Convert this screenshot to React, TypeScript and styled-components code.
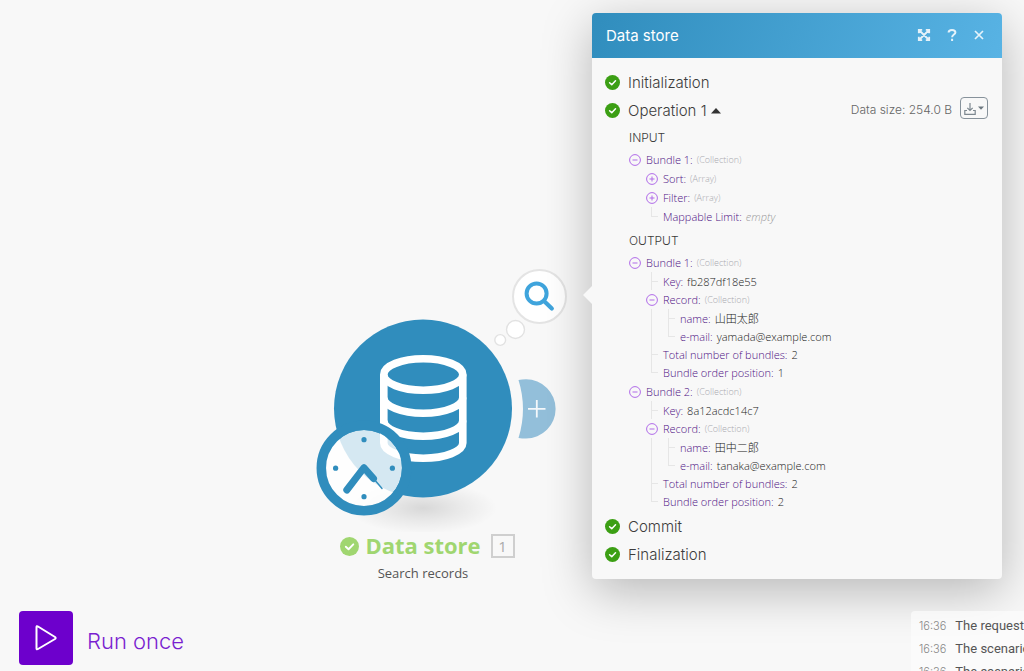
import React from "react";
import styled, { createGlobalStyle } from "styled-components";

const ui = `Inter, "Liberation Sans", sans-serif`;
const humanist = `"Open Sans", "Noto Sans", "Noto Sans CJK JP", sans-serif`;

const GlobalStyle = createGlobalStyle`
  * { box-sizing: border-box; }
  body { margin: 0; background: #f8f8f8; font-family: ${ui}; color: #555; }
  button { font: inherit; color: inherit; background: none; border: 0; padding: 0; cursor: pointer; }
  ul { list-style: none; margin: 0; padding: 0; }
  h1, h2, h3, p { margin: 0; font-weight: 400; }
`;

const Page = styled.div`
  display: flex;
  flex-direction: column;
  height: 100vh;
  overflow: hidden;
`;

const Workspace = styled.main`
  display: flex;
  align-items: flex-start;
  flex: 0 0 auto;
  padding: 13px 22px 32px 0;
`;

const Canvas = styled.section`
  position: relative;
  flex: 1;
  align-self: stretch;
`;

const Module = styled.div`
  position: absolute;
  right: 22px;
  top: 249px;
  width: 260px;
`;

const ModuleArt = styled.svg`
  display: block;
  width: 260px;
  height: 270px;
`;

const AddButton = styled.button`
  position: absolute;
  left: 208px;
  top: 117px;
  width: 38px;
  height: 60px;
  svg { display: block; }
`;

const BubbleButton = styled.button`
  position: absolute;
  left: 202px;
  top: 7px;
  width: 55px;
  height: 55px;
  border: 2px solid #e4e4e4;
  border-radius: 50%;
  background: #fff;
  svg { display: block; }
`;

const ModuleCaption = styled.div`
  position: absolute;
  left: 0;
  top: 268px;
  width: 235px;
  display: flex;
  flex-direction: column;
  align-items: center;
  font-family: ${humanist};
`;

const ModuleTitle = styled.div`
  display: flex;
  align-items: flex-end;
  gap: 6px;
  h2 { font-size: 22px; line-height: 30px; font-weight: 700; color: #a0d670; white-space: nowrap; }
  svg { margin-bottom: 4px; }
`;

const RunCount = styled.span`
  width: 24px;
  height: 24px;
  margin: 0 0 2px 4px;
  border: 2px solid #cfcfcf;
  color: #aaa;
  font-size: 15px;
  line-height: 20px;
  text-align: center;
`;

const ModuleSubtitle = styled.p`
  padding-right: 9px;
  font-size: 13px;
  line-height: 26px;
  color: #555;
`;

const Panel = styled.aside`
  position: relative;
  width: 410px;
  border-radius: 4px;
  background: #f8f8f8;
  box-shadow: 0 12px 50px rgba(0, 0, 0, 0.27);
  &::before {
    content: "";
    position: absolute;
    left: -9px;
    top: 273px;
    border: 9px solid transparent;
    border-left-width: 0;
    border-right-color: #f8f8f8;
  }
`;

const PanelHeader = styled.header`
  display: flex;
  align-items: center;
  justify-content: space-between;
  height: 45px;
  padding: 0 17px 0 14px;
  border-radius: 4px 4px 0 0;
  background: linear-gradient(110deg, #308dbd, #58b3e4);
  color: #fff;
  h1 { font-size: 15px; line-height: 20px; }
`;

const HeaderActions = styled.div`
  display: flex;
  align-items: center;
  gap: 15px;
  padding-bottom: 2px;
  opacity: 0.85;
  button { display: flex; }
`;

const PanelBody = styled.div`
  padding: 10px 14px 11px 13px;
`;

const StatusRow = styled.div`
  display: flex;
  align-items: center;
  gap: 8px;
  height: 28px;
  h2, button { padding-top: 2px; font-size: 15px; line-height: 20px; font-weight: 300; color: #3c3c3c; }
  button { display: flex; align-items: center; gap: 4px; }
`;

const DataSize = styled.span`
  margin-left: auto;
  font-size: 12px;
  font-weight: 300;
  line-height: 16px;
  color: #666;
`;

const DownloadButton = styled.button`
  display: flex;
  align-items: center;
  justify-content: center;
  width: 28px;
  height: 22px;
  margin-bottom: 4px;
  border: 1px solid #87929b;
  border-radius: 4px;
`;

const Section = styled.section`
  padding-left: 24px;
  margin-bottom: 2px;
  h3 { padding-top: 2px; font-size: 12px; line-height: 24px; font-weight: 300; color: #3c3c3c; }
`;

const Tree = styled.ul`
  font-family: ${humanist};
  font-size: 11px;
  font-weight: 300;
  & > li + li { margin-top: 1px; }
`;

const Branch = styled.ul`
  padding-left: 17px;
`;

const Item = styled.li<{ $lines?: boolean; $leaf?: boolean }>`
  position: relative;
  ${({ $lines, $leaf }) =>
    $lines &&
    `
    &::before {
      content: "";
      position: absolute;
      left: 5px;
      top: ${$leaf ? 0 : 19}px;
      bottom: 0;
      border-left: 1px solid #e6e6e6;
    }
    &:last-child::before { bottom: 9px; }
  `}
`;

const Line = styled.div<{ $leaf?: boolean }>`
  display: flex;
  align-items: center;
  gap: 4px;
  height: ${({ $leaf }) => ($leaf ? 18 : 19)}px;
  white-space: nowrap;
  ${({ $leaf }) =>
    $leaf &&
    `
    padding-left: 17px;
    &::before {
      content: "";
      position: absolute;
      left: 5px;
      top: 9px;
      width: 7px;
      border-top: 1px solid #e6e6e6;
    }
  `}
`;

const Toggle = styled.button`
  display: flex;
  width: 12px;
  height: 12px;
  margin-right: 1px;
`;

const Name = styled.span`
  color: #4e1084;
`;

const Value = styled.span`
  color: #222;
`;

const Kind = styled.span`
  font-size: 9px;
  color: #aaaab0;
`;

const Empty = styled.em`
  color: #999;
`;

const Footer = styled.footer`
  display: flex;
  align-items: flex-start;
  justify-content: space-between;
  flex: 1;
  min-height: 0;
  padding-left: 19px;
`;

const RunButton = styled.button`
  display: flex;
  align-items: center;
  gap: 14px;
  font-size: 22px;
  font-weight: 300;
  line-height: 28px;
  color: #7a1fd0;
`;

const RunIcon = styled.span`
  display: flex;
  align-items: center;
  justify-content: center;
  width: 54px;
  height: 54px;
  border-radius: 4px;
  background: #6d00cc;
`;

const RunLabel = styled.span`
  padding-top: 6px;
`;

const Log = styled.ul`
  position: relative;
  display: flex;
  flex-direction: column;
  justify-content: flex-end;
  width: 113px;
  height: 72px;
  padding-left: 8px;
  overflow: hidden;
  border-radius: 4px 0 0 0;
  background: rgba(252, 252, 252, 0.7);
`;

const LogRow = styled.li`
  display: flex;
  align-items: center;
  gap: 9px;
  flex: 0 0 23px;
  font-family: Roboto, ${ui};
  font-size: 13px;
  color: #555;
  white-space: nowrap;
  time { font-family: ${ui}; font-size: 11px; font-weight: 300; color: #888; }
`;

const Check = ({ size = 15, color = "#3c9f14" }: { size?: number; color?: string }) => (
  <svg width={size} height={size} viewBox="0 0 16 16" aria-hidden="true">
    <circle cx="8" cy="8" r="8" fill={color} />
    <path d="M4.9 8.2 7.2 10.3 11.2 6.2" fill="none" stroke="#fff" strokeWidth="1.6" strokeLinecap="round" strokeLinejoin="round" />
  </svg>
);

type Node = { name: string; value?: string; kind?: string; closed?: boolean; children?: Node[] };

const TreeItem = ({ node, nested }: { node: Node; nested?: boolean }) => {
  const leaf = !node.kind;
  return (
    <Item $lines={nested} $leaf={leaf}>
      <Line $leaf={leaf}>
        {!leaf && (
          <Toggle aria-label={`${node.closed ? "Expand" : "Collapse"} ${node.name}`}>
            <svg width="12" height="12" viewBox="0 0 12 12" fill="none" stroke="#b06be8">
              <circle cx="6" cy="6" r="5.4" />
              <path d={node.closed ? "M3.5 6h5M6 3.5v5" : "M3.5 6h5"} />
            </svg>
          </Toggle>
        )}
        <Name>{node.name}:</Name>
        {node.kind && <Kind>({node.kind})</Kind>}
        {leaf && (node.value ? <Value>{node.value}</Value> : <Empty>empty</Empty>)}
      </Line>
      {node.children && (
        <Branch>
          {node.children.map((c) => (
            <TreeItem key={c.name} node={c} nested />
          ))}
        </Branch>
      )}
    </Item>
  );
};

const input: Node[] = [
  {
    name: "Bundle 1",
    kind: "Collection",
    children: [
      { name: "Sort", kind: "Array", closed: true },
      { name: "Filter", kind: "Array", closed: true },
      { name: "Mappable Limit" },
    ],
  },
];

const bundle = (n: number, key: string, name: string, mail: string): Node => ({
  name: `Bundle ${n}`,
  kind: "Collection",
  children: [
    { name: "Key", value: key },
    {
      name: "Record",
      kind: "Collection",
      children: [
        { name: "name", value: name },
        { name: "e-mail", value: mail },
      ],
    },
    { name: "Total number of bundles", value: "2" },
    { name: "Bundle order position", value: String(n) },
  ],
});

const output: Node[] = [
  bundle(1, "fb287df18e55", "山田太郎", "yamada@example.com"),
  bundle(2, "8a12acdc14c7", "田中二郎", "tanaka@example.com"),
];

const logs = ["Repeating", "The request was accepted.", "The scenario was initialized.", "The scenario was finalized."];

const DatabaseModule = () => (
  <ModuleArt viewBox="310 262 260 270" role="img" aria-label="Data store module">
    <defs>
      <radialGradient id="ground">
        <stop offset="0" stopColor="#000" stopOpacity="0.13" />
        <stop offset="0.5" stopColor="#000" stopOpacity="0.06" />
        <stop offset="1" stopColor="#000" stopOpacity="0" />
      </radialGradient>
    </defs>
    <ellipse cx="423" cy="508" rx="74" ry="26" fill="url(#ground)" />
    <circle cx="423" cy="408.500" r="89" fill="#308dbd" />
    <g fill="none" stroke="#fff" strokeWidth="7.6">
      <ellipse cx="423.300" cy="374.500" rx="39.500" ry="15.700" />
      <path d="M383.800 374.500V443C383.800 451 401 458.200 423.300 458.200S462.800 451 462.800 443V374.500" />
      <path d="M383.800 397.500C383.800 406 401 413.300 423.300 413.300S462.800 406 462.800 397.500" />
      <path d="M383.800 420.500C383.800 429 401 436.200 423.300 436.200S462.800 429 462.800 420.500" />
    </g>
    <circle cx="364" cy="468" r="38" fill="#fff" fillOpacity="0.8" />
    <circle cx="364" cy="468" r="42.700" fill="none" stroke="#308dbd" strokeWidth="9.500" />
    <g fill="#308dbd">
      <circle cx="364" cy="439.700" r="2.600" />
      <circle cx="364" cy="496.700" r="2.600" />
      <circle cx="335.600" cy="468.200" r="2.600" />
      <circle cx="392.400" cy="468.200" r="2.600" />
    </g>
    <g fill="none" stroke="#308dbd" strokeLinecap="round" strokeLinejoin="round">
      <path d="M346.800 490 364 467.700 373.500 478.500" strokeWidth="7" />
      <path d="M374 479 382 488.500" strokeWidth="1.400" />
    </g>
    <g fill="#fff" stroke="#e2e2e2" strokeWidth="1.400">
      <circle cx="515.500" cy="329.500" r="9" />
      <circle cx="500.200" cy="340" r="5.400" />
    </g>
  </ModuleArt>
);

export default function App() {
  return (
    <Page>
      <GlobalStyle />
      <Workspace>
        <Canvas>
          <Module>
            <DatabaseModule />
            <AddButton aria-label="Add another module">
              <svg width="38" height="60" viewBox="518 379 38 60">
                <path d="M518.500 380Q522 379.300 526 379.300A29.400 29.400 0 0 1 526 438.500Q522 438.500 518.500 438A98 98 0 0 0 518.500 380Z" fill="#93bfda" />
                <path d="M528 408.800h17.500M536.800 400v17.500" stroke="#f4f8fb" strokeWidth="1.800" />
              </svg>
            </AddButton>
            <BubbleButton aria-label="Show execution details">
              <svg width="51" height="51" viewBox="514 271 51 51" fill="none" stroke="#3fa4dc" strokeLinecap="round">
                <circle cx="536.600" cy="293.500" r="10" strokeWidth="4" />
                <path d="M544.500 301.500 551.800 308.500" strokeWidth="4.200" />
              </svg>
            </BubbleButton>
            <ModuleCaption>
              <ModuleTitle>
                <Check size={19} color="#a0d670" />
                <h2>Data store</h2>
                <RunCount>1</RunCount>
              </ModuleTitle>
              <ModuleSubtitle>Search records</ModuleSubtitle>
            </ModuleCaption>
          </Module>
        </Canvas>
        <Panel>
          <PanelHeader>
            <h1>Data store</h1>
            <HeaderActions>
              <button aria-label="Maximize">
                <svg width="14" height="14" viewBox="0 0 14 14" fill="none" stroke="#fff" strokeWidth="1.800">
                  <path d="M1.800 5.200V1.800H5.200M8.800 1.800h3.400V5.200M12.200 8.800v3.400H8.800M5.200 12.200H1.800V8.800M2 2l10 10M12 2 2 12" />
                </svg>
              </button>
              <button aria-label="Help">
                <svg width="12" height="14" viewBox="0 0 12 14" fill="none" stroke="#fff" strokeWidth="2">
                  <path d="M2.600 4.600C2.600 2.600 4 1.900 6 1.900S9.400 2.900 9.400 4.500C9.400 6.600 6.100 6.600 6.100 9.300M6.100 10.800V13" />
                </svg>
              </button>
              <button aria-label="Close">
                <svg width="12" height="12" viewBox="0 0 12 12" stroke="#fff" strokeWidth="1.700">
                  <path d="M2 2l8 8M10 2l-8 8" />
                </svg>
              </button>
            </HeaderActions>
          </PanelHeader>
          <PanelBody>
            <StatusRow><Check /><h2>Initialization</h2></StatusRow>
            <StatusRow>
              <Check />
              <button aria-expanded="true">
                Operation 1
                <svg width="10" height="6" viewBox="0 0 10 6"><path d="M0 5.500 5 0 10 5.500Z" fill="#333" /></svg>
              </button>
              <DataSize>Data size: 254.0 B</DataSize>
              <DownloadButton aria-label="Download">
                <svg width="20" height="14" viewBox="0 0 20 14" fill="none" stroke="#7d8890" strokeWidth="1.200">
                  <path d="M6 1v7M3.300 5.800 6 8.500 8.700 5.800M3 8.500H.8V12.400H11.200V8.500H9" />
                  <path d="M14 4.500h6L17 7.800Z" fill="#6d7880" stroke="none" />
                </svg>
              </DownloadButton>
            </StatusRow>
            <Section>
              <h3>INPUT</h3>
              <Tree>{input.map((n) => <TreeItem key={n.name} node={n} />)}</Tree>
            </Section>
            <Section>
              <h3>OUTPUT</h3>
              <Tree>{output.map((n) => <TreeItem key={n.name} node={n} />)}</Tree>
            </Section>
            <StatusRow><Check /><h2>Commit</h2></StatusRow>
            <StatusRow><Check /><h2>Finalization</h2></StatusRow>
          </PanelBody>
        </Panel>
      </Workspace>
      <Footer>
        <RunButton>
          <RunIcon>
            <svg width="24" height="28" viewBox="0 0 24 28" fill="none" stroke="#fff" strokeWidth="2" strokeLinejoin="round">
              <path d="M2.500 3.300Q2.500 1.600 4 2.500L21 13Q22.300 14 21 15L4 25Q2.500 25.900 2.500 24.200Z" />
            </svg>
          </RunIcon>
          <RunLabel>Run once</RunLabel>
        </RunButton>
        <Log>
          {logs.map((text, i) => (
            <LogRow key={i}><time>16:36</time>{text}</LogRow>
          ))}
        </Log>
      </Footer>
    </Page>
  );
}
